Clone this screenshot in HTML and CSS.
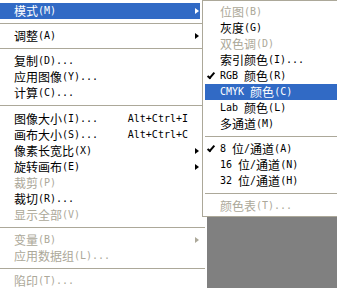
FILE: index.html
```html
<!DOCTYPE html>
<html lang="zh-CN">
<head>
  <meta charset="UTF-8" />
  <title>图像菜单</title>
  <link rel="stylesheet" href="styles.css">
</head>
<body>

  <div class="ecran">
    <ul class="menu principal">
      <li class="item actif">模式<span class="lat">(M)</span><span class="fleche"></span></li>
      <li class="sep"></li>
      <li class="item">调整<span class="lat">(A)</span><span class="fleche"></span></li>
      <li class="sep"></li>
      <li class="item">复制<span class="lat">(D)...</span></li>
      <li class="item">应用图像<span class="lat">(Y)...</span></li>
      <li class="item">计算<span class="lat">(C)...</span></li>
      <li class="sep large"></li>
      <li class="item">图像大小<span class="lat">(I)...</span><span class="raccourci">Alt+Ctrl+I</span></li>
      <li class="item">画布大小<span class="lat">(S)...</span><span class="raccourci">Alt+Ctrl+C</span></li>
      <li class="item">像素长宽比<span class="lat">(X)</span><span class="fleche"></span></li>
      <li class="item">旋转画布<span class="lat">(E)</span><span class="fleche"></span></li>
      <li class="item off">裁剪<span class="lat">(P)</span></li>
      <li class="item">裁切<span class="lat">(R)...</span></li>
      <li class="item off">显示全部<span class="lat">(V)</span></li>
      <li class="sep"></li>
      <li class="item off">变量<span class="lat">(B)</span><span class="fleche"></span></li>
      <li class="item off">应用数据组<span class="lat">(L)...</span></li>
      <li class="sep"></li>
      <li class="item off">陷印<span class="lat">(T)...</span></li>
    </ul>

    <ul class="menu sous">
      <li class="item off">位图<span class="lat">(B)</span></li>
      <li class="item">灰度<span class="lat">(G)</span></li>
      <li class="item off">双色调<span class="lat">(D)</span></li>
      <li class="item">索引颜色<span class="lat">(I)...</span></li>
      <li class="item coche"><span class="lat">RGB </span>颜色<span class="lat">(R)</span></li>
      <li class="item actif"><span class="lat">CMYK </span>颜色<span class="lat">(C)</span></li>
      <li class="item"><span class="lat">Lab </span>颜色<span class="lat">(L)</span></li>
      <li class="item">多通道<span class="lat">(M)</span></li>
      <li class="sep"></li>
      <li class="item coche"><span class="lat">8 </span>位<span class="lat">/</span>通道<span class="lat">(A)</span></li>
      <li class="item"><span class="lat">16 </span>位<span class="lat">/</span>通道<span class="lat">(N)</span></li>
      <li class="item"><span class="lat">32 </span>位<span class="lat">/</span>通道<span class="lat">(H)</span></li>
      <li class="sep"></li>
      <li class="item off">颜色表<span class="lat">(T)...</span></li>
    </ul>
  </div>

</body>
</html>
```

FILE: styles.css
```css
body {
  margin: 0;
  background: #808080; /* fond gris de l'espace de travail */
  overflow: hidden;
  font-family: "Noto Sans CJK SC", "Liberation Sans", sans-serif;
  font-size: 12px;
  color: #000;
}
.ecran {
  position: relative;
  width: 337px;
  height: 288px;
}
.menu {
  list-style: none;
  margin: 0;
  background: #fff;
}
.principal {
  width: 207px;
  height: 288px;
  padding: 3px 0 0 0;
  box-sizing: border-box;
}
.item {
  position: relative;
  display: flex;
  align-items: center;
  height: 16px;
  line-height: 16px;
  white-space: pre;
}
.lat {
  font-family: "DejaVu Sans Mono", "Liberation Mono", monospace;
  font-size: 10px;
}
.principal .item {
  padding-left: 14px;
  margin-right: 7px;
}
.item.actif {
  background: #316ac5;
  color: #fff;
}
.item.off {
  color: #aca899;
}
.sep {
  height: 1px;
  margin: 4px 2px 4px 0;
  background: #aca899;
}
.sep.large {
  margin-bottom: 5px;
}
.fleche {
  position: absolute;
  right: 1px;
  top: 5px;
  width: 0;
  height: 0;
  border-top: 3.5px solid transparent;
  border-bottom: 3.5px solid transparent;
  border-left: 4px solid #000;
}
.actif .fleche {
  border-left-color: #fff;
}
.off .fleche {
  border-left-color: #aca899;
}
.raccourci {
  position: absolute;
  right: 12px;
  font-family: "DejaVu Sans Mono", "Liberation Mono", monospace;
  font-size: 10px;
}

/* sous-menu Mode */
.sous {
  position: absolute;
  left: 202px;
  top: 0;
  width: 150px;
  height: 217px;
  padding: 3px 0 0 0;
  box-sizing: border-box;
  border: 1px solid #aca899;
}
.sous .item {
  margin-left: 2px;
  padding-left: 15px;
}
.sous .sep {
  margin: 4px 0 4px 2px;
}
.coche::before {
  content: "";
  position: absolute;
  left: 4px;
  top: 3px;
  width: 2px;
  height: 6px;
  border: solid #000;
  border-width: 0 2px 2px 0;
  transform: rotate(40deg);
}
```
